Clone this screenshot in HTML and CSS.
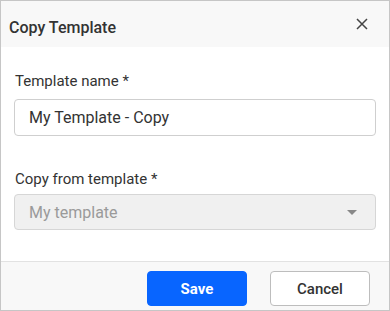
FILE: index.html
```html
<!DOCTYPE html>
<html lang="en">

<head>
    <meta charset="UTF-8">
    <meta name="viewport" content="width=device-width, initial-scale=1.0">
    <title>Copy Template</title>
    <link rel="stylesheet" href="styles.css">
</head>

<body>
    <div class="dialog">
        <div class="dialog__header">
            <h1 class="dialog__title">Copy Template</h1>
            <button class="dialog__close" aria-label="Close">
                <svg width="12" height="12" viewBox="0 0 12 12">
                    <path d="M1 1 L11 11 M11 1 L1 11" stroke="#444" stroke-width="1.5" fill="none"/>
                </svg>
            </button>
        </div>

        <form class="dialog__body">
            <label class="field__label" for="name">Template name *</label>
            <input class="field__input" type="text" id="name" value="My Template - Copy">

            <label class="field__label field__label--second" for="source">Copy from template *</label>
            <div class="field__select" id="source">
                <span>My template</span>
                <span class="field__arrow"></span>
            </div>
        </form>

        <div class="dialog__footer">
            <button class="btn btn--primary">Save</button>
            <button class="btn btn--secondary">Cancel</button>
        </div>
    </div>
</body>

</html>
```

FILE: styles.css
```css
html {
    box-sizing: border-box;
}

*,
*:before,
*:after {
    box-sizing: inherit;
}

body {
    margin: 0;
    font-family: Roboto, "Liberation Sans", sans-serif;
    color: #333;
}

.dialog {
    width: 390px;
    height: 311px;
    border: 1px solid #c6c6c6;
    display: flex;
    flex-direction: column;
    background: #fff;
}

.dialog__header {
    height: 46px;
    background: #f8f8f8;
    display: flex;
    align-items: center;
    justify-content: space-between;
    padding: 0 21px 0 8px;
}

.dialog__title {
    margin: 0;
    font-size: 16px;
    font-weight: 500;
    color: #333;
    padding-top: 6px;
}

.dialog__close {
    border: none;
    background: none;
    padding: 0;
    width: 12px;
    height: 12px;
    display: flex;
    cursor: pointer;
}

.dialog__body {
    flex: 1;
    display: flex;
    flex-direction: column;
    padding: 25px 13px 0 13px;
    margin: 0;
}

.field__label {
    font-size: 15px;
    line-height: 18px;
    color: #333;
    padding-left: 1px;
    margin-bottom: 9px;
}

.field__label--second {
    margin-top: 34px;
    margin-bottom: 6px;
}

.field__input {
    height: 37px;
    width: 100%;
    border: 1px solid #cfcfcf;
    border-radius: 4px;
    padding: 0 14px;
    font-family: inherit;
    font-size: 16px;
    color: #333;
    outline: none;
}

.field__select {
    height: 36px;
    border: 1px solid #d6d6d6;
    border-radius: 4px;
    background: #f0f0f0;
    color: #9a9a9a;
    font-size: 16px;
    display: flex;
    align-items: center;
    justify-content: space-between;
    padding: 0 18px 0 14px;
}

.field__arrow {
    width: 0;
    height: 0;
    border-left: 5px solid transparent;
    border-right: 5px solid transparent;
    border-top: 5px solid #888;
}

.dialog__footer {
    height: 49px;
    border-top: 1px solid #e2e2e2;
    background: #f8f8f8;
    display: flex;
    justify-content: flex-end;
    align-items: flex-start;
    gap: 23px;
    padding: 9px 19px 0 0;
}

.btn {
    width: 100px;
    height: 35px;
    border-radius: 4px;
    font-family: inherit;
    font-size: 15px;
    cursor: pointer;
}

.btn--primary {
    background: #0865ff;
    border: 1px solid #0865ff;
    color: #fff;
    font-weight: 700;
}

.btn--secondary {
    background: #fff;
    border: 1px solid #bdbdbd;
    color: #333;
    font-weight: 500;
}
```
